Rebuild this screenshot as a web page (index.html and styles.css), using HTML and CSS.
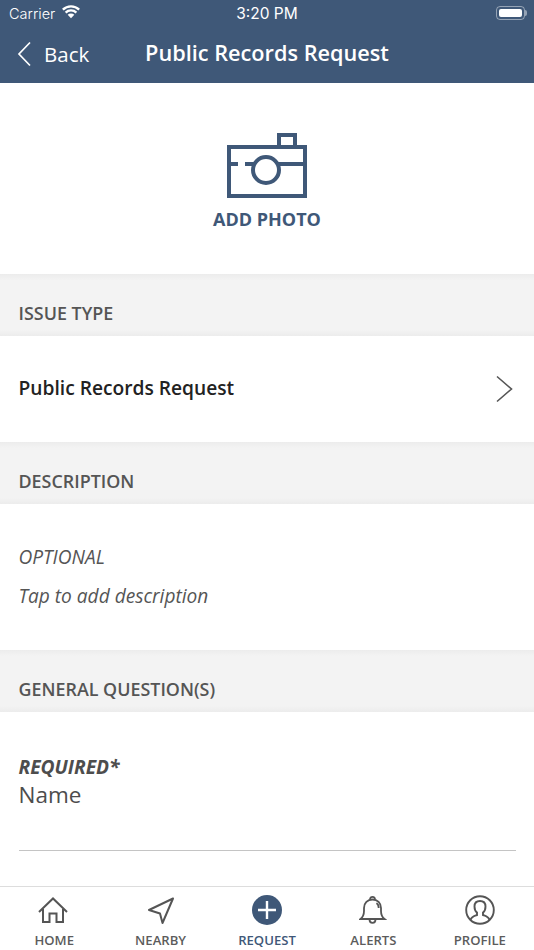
FILE: index.html
```html
<!DOCTYPE html>
<html lang="en">
<head>
<meta charset="utf-8">
<title>Public Records Request</title>
<link rel="stylesheet" href="styles.css">
</head>
<body>
<div class="app">
  <header class="top">
    <div class="status">
      <div class="status-left">
        <span>Carrier</span>
        <svg class="wifi" width="20" height="15" viewBox="0 0 18 14"><path d="M9 13.400 5.900 10.100a4.400 4.400 0 0 1 6.200 0z" fill="#fff"/><path d="M4 8a7.200 7.200 0 0 1 10 0M1.400 5.200a11 11 0 0 1 15.200 0" fill="none" stroke="#fff" stroke-width="2.200"/></svg>
      </div>
      <span class="clock">3:20 PM</span>
      <div class="battery"><span class="battery-fill"></span></div>
    </div>
    <div class="nav">
      <div class="back">
        <svg width="16" height="26" viewBox="0 0 16 26"><path d="M14 1.500 3 13l11 11.500" fill="none" stroke="#fff" stroke-width="1.700"/></svg>
        <span>Back</span>
      </div>
      <h1 class="title">Public Records Request</h1>
    </div>
  </header>

  <main class="content">
    <section class="photo">
      <svg width="82" height="66" viewBox="0 0 82 66" fill="none" stroke="#3f5878" stroke-width="4">
        <path d="M3 14h76v49H3zM53 14V2h16v12"/>
        <path d="M3 31h9M19 31h9M52 31h27"/>
        <circle cx="40" cy="37" r="13"/>
      </svg>
      <span class="photo-label">ADD PHOTO</span>
    </section>

    <h2 class="band">ISSUE TYPE</h2>
    <section class="issue">
      <span>Public Records Request</span>
      <svg width="18" height="28" viewBox="0 0 18 28"><path d="M1 1.500 15.500 14 1 26.500" fill="none" stroke="#555" stroke-width="1.600"/></svg>
    </section>

    <h2 class="band">DESCRIPTION</h2>
    <section class="desc">
      <p>OPTIONAL</p>
      <p>Tap to add description</p>
    </section>

    <h2 class="band">GENERAL QUESTION(S)</h2>
    <section class="question">
      <p class="req">REQUIRED*</p>
      <p class="qname">Name</p>
      <div class="rule"></div>
    </section>
  </main>

  <nav class="tabs">
    <div class="tab">
      <svg width="32" height="30" viewBox="0 0 32 30" fill="none" stroke="#555" stroke-width="2"><path d="M1 17 15 3.500 29 17M5 14v13h6.500v-8.500h7V27H25V14"/></svg>
      <span>HOME</span>
    </div>
    <div class="tab">
      <svg width="32" height="30" viewBox="0 0 32 30" fill="none" stroke="#555" stroke-width="2" stroke-linejoin="round"><path d="M28 3.500 4 15l11 3.500L17.500 28z"/></svg>
      <span>NEARBY</span>
    </div>
    <div class="tab active">
      <svg width="30" height="30" viewBox="0 0 30 30"><circle cx="15" cy="15" r="15" fill="#3f5878"/><path d="M15 6v18M6 15h18" stroke="#fff" stroke-width="2.400"/></svg>
      <span>REQUEST</span>
    </div>
    <div class="tab">
      <svg width="28" height="30" viewBox="0 0 28 30" fill="none" stroke="#555" stroke-width="1.800"><path d="M1.500 24h24c-2.500-2-3.500-4-3.500-8v-3c0-5-3.500-8.500-8.500-8.500S5 8 5 13v3c0 4-1 6-3.500 8z"/><path d="M11 4.500C11 1 16 1 16 4.500M10.500 24.500c0 4.500 6 4.500 6 0M17.500 8c1.500 1 2.200 2.800 2.200 5"/></svg>
      <span>ALERTS</span>
    </div>
    <div class="tab">
      <svg width="30" height="30" viewBox="0 0 30 30" fill="none" stroke="#555" stroke-width="1.900"><circle cx="15" cy="15" r="13.800"/><path d="M5.500 25c1-3.500 4-4 6.500-5v-2.500c-1.500-1-2.500-3-2.500-6 0-3.500 2.200-5.500 5.500-5.500s5.500 2 5.500 5.500c0 3-1 5-2.500 6V20c2.500 1 5.500 1.500 6.500 5"/></svg>
      <span>PROFILE</span>
    </div>
  </nav>
</div>
</body>
</html>
```
FILE: styles.css
```css
* { box-sizing: border-box; }
html, body { margin: 0; padding: 0; }
body { font-family: "Open Sans", "Liberation Sans", sans-serif; background: #fff; }
p, h1, h2 { margin: 0; }

.app { width: 534px; height: 950px; display: flex; flex-direction: column; overflow: hidden; }

.top { height: 83px; background: #3f5878; color: #fff; flex: none; }
.status { height: 28px; position: relative; display: flex; align-items: center; justify-content: space-between; padding: 0 9px 2px 9px; font-family: Inter, "Liberation Sans", sans-serif; font-size: 15px; }
.status-left { display: flex; align-items: center; gap: 6px; font-size: 14.500px; font-weight: 300; }
.wifi { margin-top: -4px; }
.clock { position: absolute; left: 0; right: 0; text-align: center; font-weight: 400; font-size: 15.500px; }
.battery { position: relative; width: 29px; height: 14px; border: 1px solid rgba(255,255,255,.45); border-radius: 4px; padding: 2px; margin-top: -1px; }
.battery::after { content: ""; position: absolute; right: -3px; top: 3px; width: 2px; height: 6px; background: rgba(255,255,255,.45); border-radius: 0 2px 2px 0; }
.battery-fill { display: block; height: 100%; background: #fff; border-radius: 2px; }

.nav { height: 55px; position: relative; display: flex; align-items: center; padding: 0 0 3px 16px; }
.back { display: flex; align-items: center; gap: 12px; font-size: 20.500px; font-weight: 400; }
.title { position: absolute; left: 0; right: 0; top: 9px; text-align: center; font-size: 21.700px; line-height: 32px; font-weight: 600; }

.content { flex: 1; }
.photo { height: 191px; display: flex; flex-direction: column; align-items: center; padding-top: 50px; gap: 7px; }
.photo-label { font-size: 18px; line-height: 26px; font-weight: 700; color: #3f5878; }

.band { height: 62px; padding: 26px 0 0 18.500px; font-size: 17.900px; line-height: 26px; font-weight: 600; color: #555; background: linear-gradient(#ececec 0, #f3f3f3 6px, #f3f3f3 56px, #ececec 62px); }

.issue { height: 106px; display: flex; align-items: center; justify-content: space-between; padding: 0 20px 4px 18.500px; font-size: 19.200px; font-weight: 600; color: #222; }
.issue svg { margin-top: 4px; }
.desc { height: 146px; padding-top: 38px; font-size: 19.100px; line-height: 30px; font-style: italic; color: #555; }
.desc p { padding-left: 18.500px; margin-bottom: 9px; }

.question { height: 174px; padding: 41px 18px 0 18.500px; }
.req { font-size: 19.200px; line-height: 27px; font-style: italic; font-weight: 700; color: #4d4d4d; }
.qname { font-size: 22.500px; line-height: 30px; color: #4d4d4d; }
.rule { height: 1px; background: #c4c4c4; margin-top: 40px; }

.tabs { height: 64px; flex: none; display: grid; grid-template-columns: repeat(5, 1fr); border-top: 1px solid #ddd; background: #fff; padding: 0 1px; }
.tab { display: flex; flex-direction: column; align-items: center; padding-top: 8px; font-size: 13.100px; line-height: 18px; font-weight: 600; color: #5c5c5c; gap: 0; }
.tab svg { margin-bottom: 6px; }
.tab.active { color: #3f5878; }
```
